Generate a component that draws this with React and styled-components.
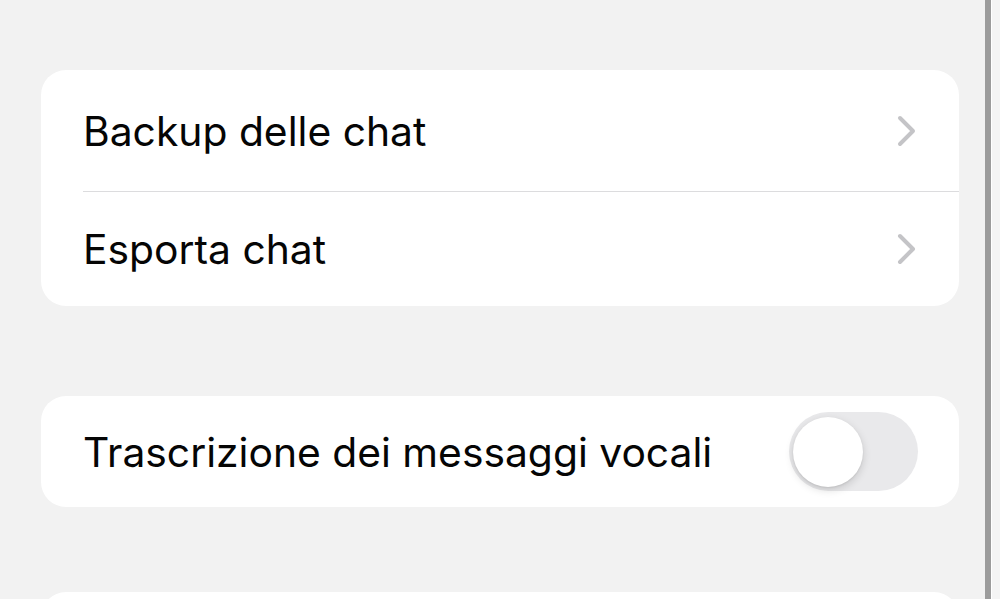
import styled, { createGlobalStyle } from 'styled-components';

const GlobalStyle = createGlobalStyle`
  html, body {
    margin: 0;
    padding: 0;
    background: #f2f2f2;
    overflow: hidden;
  }
  body {
    font-family: Inter, "Noto Sans", "Liberation Sans", sans-serif;
    -webkit-font-smoothing: antialiased;
  }
`;

const Screen = styled.div`
  display: flex;
  width: 1000px;
  height: 599px;
  overflow: hidden;
  background: #f2f2f2;
`;

const Content = styled.main`
  flex: 1;
  display: flex;
  flex-direction: column;
  padding: 70px 26px 0 41px;
`;

const ScrollEdge = styled.div`
  width: 15px;
  display: flex;
  flex-shrink: 0;

  &::before {
    content: '';
    width: 6px;
    background: #9c9c9c;
  }
  &::after {
    content: '';
    flex: 1;
    background: #f4f4f4;
    border-left: 1px solid #ffffff;
  }
`;

const Group = styled.section`
  background: #ffffff;
  border-radius: 25px;
  margin-bottom: ${(p) => p.$gap || 0}px;
  flex-shrink: 0;
`;

const Row = styled.div`
  display: flex;
  align-items: center;
  height: ${(p) => p.$height}px;
  margin-left: 42px;
  padding-right: ${(p) => p.$right || 42}px;
  border-bottom: ${(p) => (p.$divider ? '1px solid #dcdcde' : 'none')};
  box-sizing: border-box;
`;

const Label = styled.span`
  flex: 1;
  font-size: 40.8px;
  color: #050505;
`;

const Chevron = () => (
  <svg width="20" height="32" viewBox="0 0 20 32" fill="none">
    <path d="M3 3 L16 16 L3 29" stroke="#c4c4c7" strokeWidth="4" strokeLinecap="round" strokeLinejoin="round" />
  </svg>
);

const Switch = styled.div`
  width: 129px;
  height: 79px;
  border-radius: 40px;
  background: #e9e9eb;
  display: flex;
  align-items: center;
  padding-left: 4px;
  box-sizing: border-box;
`;

const Knob = styled.div`
  width: 70px;
  height: 70px;
  border-radius: 50%;
  background: #ffffff;
  box-shadow: 0 3px 8px rgba(0, 0, 0, 0.15), 0 1px 2px rgba(0, 0, 0, 0.08);
`;

export default function App() {
  return (
    <Screen>
      <GlobalStyle />
      <Content>
        <Group $gap={90}>
          <Row $height={122} $divider>
            <Label>Backup delle chat</Label>
            <Chevron />
          </Row>
          <Row $height={114}>
            <Label>Esporta chat</Label>
            <Chevron />
          </Row>
        </Group>
        <Group $gap={85}>
          <Row $height={111} $right={41}>
            <Label>Trascrizione dei messaggi vocali</Label>
            <Switch>
              <Knob />
            </Switch>
          </Row>
        </Group>
        <Group>
          <Row $height={111} />
        </Group>
      </Content>
      <ScrollEdge />
    </Screen>
  );
}
